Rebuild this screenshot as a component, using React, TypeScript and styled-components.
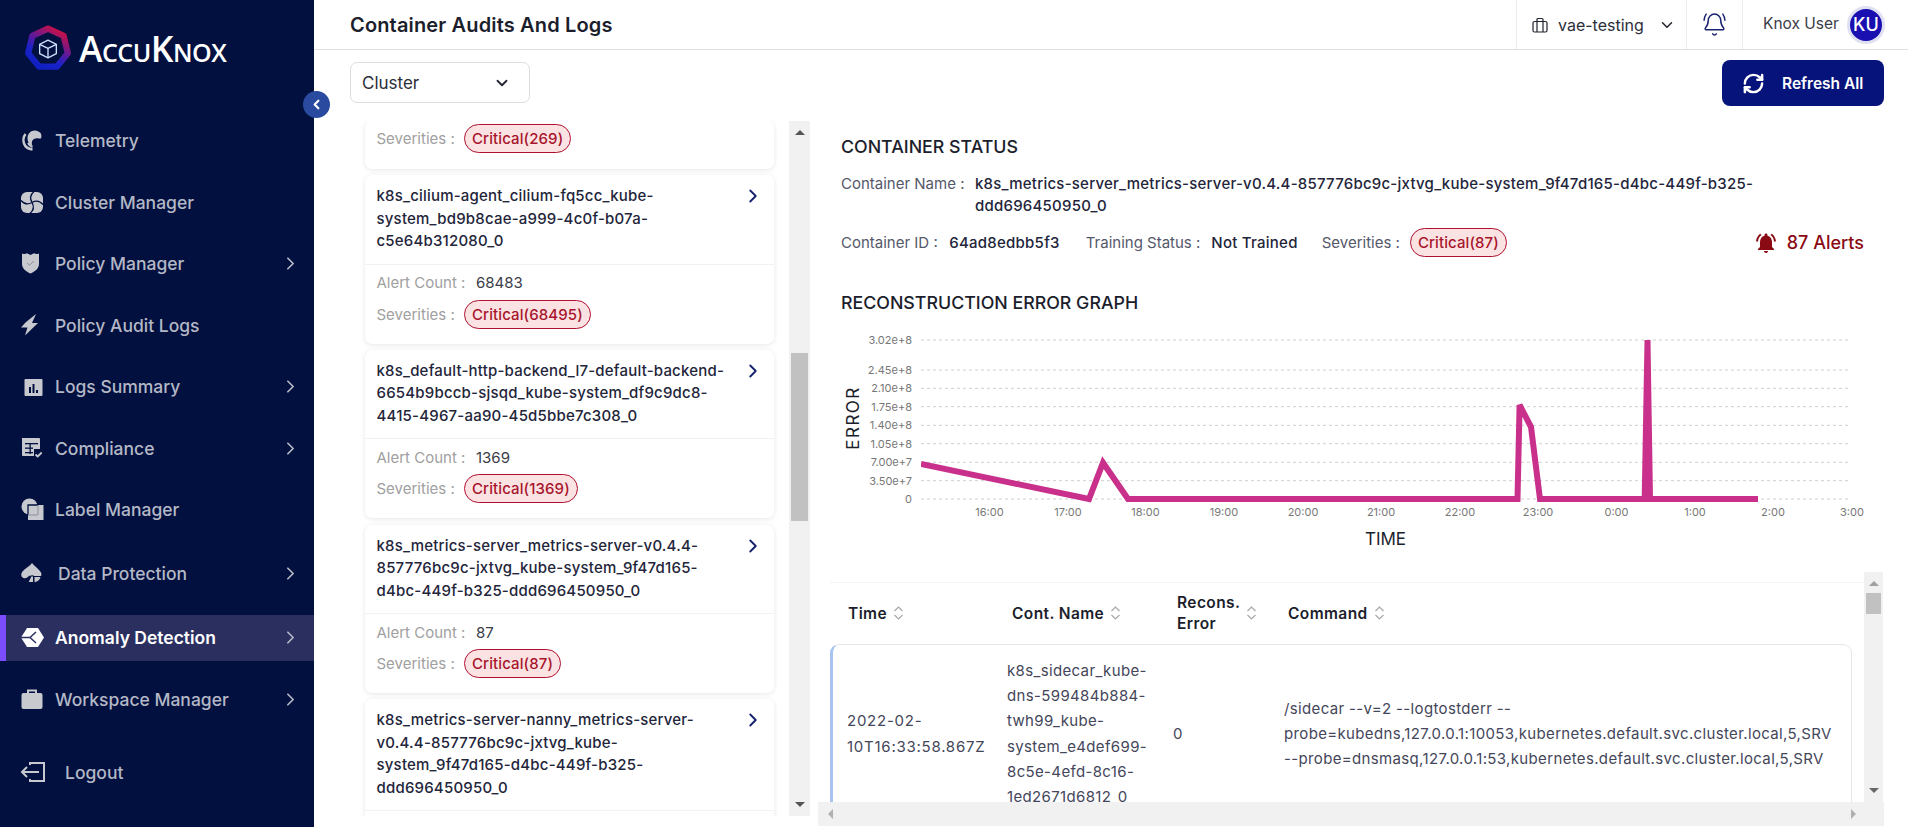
import { FunctionComponent, ReactNode } from 'react';
import styled, { createGlobalStyle } from 'styled-components';
import { BellRing, ChevronDown, ChevronLeft, ChevronRight, RefreshCw } from 'lucide-react';
import { MdNotificationsActive } from 'react-icons/md';

const GlobalStyle = createGlobalStyle`
  html, body {
    margin: 0;
    padding: 0;
    height: 100%;
    background: #fff;
    font-family: Inter, 'Liberation Sans', sans-serif;
    overflow: hidden;
  }
  * { box-sizing: border-box; }
`;

const Page = styled.div`
  display: flex;
  width: 1908px;
  height: 827px;
  position: relative;
  overflow: hidden;
`;

/* ---------- sidebar ---------- */

const Sidebar = styled.aside`
  width: 314px;
  flex: none;
  background: #01103f;
  display: flex;
  flex-direction: column;
`;

const LogoRow = styled.div`
  height: 117.5px;
  display: flex;
  align-items: flex-start;
  gap: 7px;
  padding: 25px 0 0 24px;
`;

const LogoText = styled.span`
  font-family: 'Open Sans', sans-serif;
  font-variant: small-caps;
  font-size: 35.5px;
  line-height: 46px;
  font-weight: 600;
  letter-spacing: -0.5px;
  color: #fff;
`;

const NavList = styled.nav`
  display: flex;
  flex-direction: column;
  gap: 15.5px;
`;

const NavItem = styled.div<{ $active?: boolean; $shift?: number; $textGap?: number }>`
  height: 46px;
  display: flex;
  align-items: center;
  margin-top: ${(p) => p.$shift ?? 0}px;
  padding-left: 20px;
  gap: ${(p) => p.$textGap ?? 10}px;
  font-size: 17.5px;
  font-weight: ${(p) => (p.$active ? 600 : 500)};
  color: ${(p) => (p.$active ? '#fff' : '#b4b8c6')};
  background: ${(p) => (p.$active ? '#2a2f5f' : 'transparent')};
  box-shadow: ${(p) => (p.$active ? 'inset 6px 0 0 #7c4dff' : 'none')};
`;

const NavIconBox = styled.span`
  width: 25px;
  height: 25px;
  flex: none;
  display: flex;
`;

const NavLabel = styled.span`
  flex: 1;
`;

const NavChevron = styled(ChevronRight)`
  width: 21px;
  height: 21px;
  margin-right: 13px;
  color: #b4b8c6;
  stroke-width: 2;
`;

const CollapseButton = styled.div`
  position: absolute;
  left: 303px;
  top: 91px;
  width: 27px;
  height: 27px;
  border-radius: 50%;
  background: #2a4aa0;
  color: #fff;
  display: flex;
  align-items: center;
  justify-content: center;
`;

const Logo = () => (
  <svg width="48" height="48" viewBox="0 0 46 46" style={{ flex: 'none' }}>
    <defs>
      <linearGradient id="logoRing" x1="0.8" y1="0" x2="0.2" y2="1">
        <stop offset="0" stopColor="#d3103f" />
        <stop offset="0.45" stopColor="#5a1a9e" />
        <stop offset="0.7" stopColor="#1a22c8" />
        <stop offset="1" stopColor="#0f1fc0" />
      </linearGradient>
    </defs>
    <polygon
      points="23,3.5 38,10.5 42,27 31.5,40 14.5,40 4,27 8,10.5"
      fill="none"
      stroke="url(#logoRing)"
      strokeWidth="6"
      strokeLinejoin="round"
    />
    <g fill="none" stroke="#cfe0ff" strokeWidth="1.3" strokeLinejoin="round">
      <polygon points="23,14.5 31,18.5 31,27.5 23,31.5 15,27.5 15,18.5" />
      <polyline points="15,18.5 23,22.5 31,18.5" />
      <line x1="23" y1="22.5" x2="23" y2="31.5" />
    </g>
  </svg>
);

const GLYPH = '#c8c9cf';
const NAVY = '#01103f';

const icons: Record<string, ReactNode> = {
  telemetry: (
    <>
      <path d="M20.500 5c-1.500-1.500-3.500-2.500-5.500-2.500-4.500 0-7.500 3.500-7.500 8 0 3.500 2 6.500 5 7.500-.8-1.500-1-3.500-.2-5.200 1-2 3.400-2.900 6.200-2.300 1.200.2 2 .2 2.500-.3.800-1.500.400-4-.5-5.200z" fill={GLYPH} />
      <path d="M5.500 6C3.300 9 3 12.500 4 15.500c1.200 3.400 4.500 5.500 8.500 6" fill="none" stroke={GLYPH} strokeWidth="2.400" />
      <path d="M8 15c1 2 2.500 3.300 4.500 4" fill="none" stroke={GLYPH} strokeWidth="2" />
    </>
  ),
  cluster: (
    <>
      <rect x="1" y="2" width="22" height="21" rx="6" fill={GLYPH} />
      <g fill="none" stroke={NAVY} strokeWidth="1.300">
        <path d="M12 12.500C10 9 10 5 14 1.500" />
        <path d="M12 12.500c3.500-2 7.500-2 11 2" />
        <path d="M12 12.500c2 3.500 2 7.500-2 11" />
        <path d="M12 12.500c-3.500 2-7.500 2-11-2" />
      </g>
    </>
  ),
  shield: (
    <>
      <path d="M2 2.500c2 .8 3.500.8 5-.2l3.500 1.700L14 2.300c1.500 1 3.500 1 5 .2v10.500c0 4.500-4 7.500-8.500 9.500C6 20.500 2 17.500 2 13z" fill={GLYPH} />
      <path d="M7 12l2.500 2.200L14 10" fill="none" stroke="#8a8d99" strokeWidth="1" />
    </>
  ),
  bolt: <path d="M16 1L5.500 9.500 1 14.500h6.500L5 22.500l13-12.500h-6z" fill={GLYPH} />,
  bars: (
    <>
      <rect x="4.500" y="5" width="18" height="17" rx="1" fill={GLYPH} />
      <g fill={NAVY}>
        <rect x="9" y="13" width="2" height="6" />
        <rect x="12.500" y="10" width="2" height="9" />
        <rect x="16" y="16" width="2" height="3" />
      </g>
    </>
  ),
  compliance: (
    <>
      <path d="M2 2h17a1 1 0 0 1 1 1v10h-6v7H3a1 1 0 0 1-1-1z" fill={GLYPH} />
      <g fill={NAVY}>
        <rect x="5" y="7" width="13" height="1.300" />
        <rect x="5" y="11.500" width="8" height="1.300" />
        <rect x="5" y="16" width="8" height="1.300" />
        <rect x="9.500" y="7" width="1.300" height="11" />
      </g>
      <path d="M15.500 18.500l2.200 2 4-4" fill="none" stroke={GLYPH} strokeWidth="1.800" />
    </>
  ),
  label: (
    <>
      <circle cx="9.500" cy="9.500" r="8" fill={GLYPH} />
      <rect x="8" y="8" width="15.500" height="15" fill={GLYPH} />
      <path d="M8 18V8h10" fill="none" stroke={NAVY} strokeWidth="1.300" />
      <path d="M18 8v9a1 1 0 0 1-1 1H8" fill="none" stroke="#8a8d99" strokeWidth="1" />
    </>
  ),
  spade: (
    <>
      <path d="M12 2c2 3 7 6 9 9.500 1.500 3-1 6-4.500 5.300-1-.2-2-.8-2.500-1.500v-.5h-5c-1.200 2-3.500 2.900-5.500 2.200C1 16 .5 13 2.500 10.500 5 7.500 10 5 12 2z" fill={GLYPH} />
      <path d="M13.500 15v6.500H8l3-6.500z" fill={GLYPH} stroke={NAVY} strokeWidth="1" />
      <path d="M14 15.500h7c-.5 3.500-3.500 6-7 6z" fill={GLYPH} stroke={NAVY} strokeWidth="1" />
    </>
  ),
  anomaly: (
    <>
      <polygon points="7,3 18,3 24,12.500 18,22 7,22 1,12.500" fill="#fff" />
      <path d="M1 12.500h9M10 12.500l6-5.500M10 12.500l6 5.500" fill="none" stroke="#2a2f5f" strokeWidth="1.500" />
    </>
  ),
  case: (
    <>
      <path d="M8 6V3.500h8V6" fill="none" stroke={GLYPH} strokeWidth="2" />
      <rect x="1.500" y="6" width="21" height="16" rx="2" fill={GLYPH} />
    </>
  ),
  logout: (
    <g fill="none" stroke={GLYPH} strokeWidth="2">
      <path d="M10 5V3h14v18H10v-2" />
      <path d="M19 12H2M7 7l-5 5 5 5" />
    </g>
  ),
};

const NavIcon: FunctionComponent<{ name: string }> = ({ name }) => (
  <NavIconBox>
    <svg width="25" height="25" viewBox="0 0 25 25">
      {icons[name]}
    </svg>
  </NavIconBox>
);

const navItems = [
  { label: 'Telemetry', icon: 'telemetry' },
  { label: 'Cluster Manager', icon: 'cluster' },
  { label: 'Policy Manager', icon: 'shield', arrow: true },
  { label: 'Policy Audit Logs', icon: 'bolt' },
  { label: 'Logs Summary', icon: 'bars', arrow: true },
  { label: 'Compliance', icon: 'compliance', arrow: true },
  { label: 'Label Manager', icon: 'label' },
  { label: 'Data Protection', icon: 'spade', arrow: true, shift: 2.5, textGap: 13 },
  { label: 'Anomaly Detection', icon: 'anomaly', arrow: true, active: true, shift: 2.5 },
  { label: 'Workspace Manager', icon: 'case', arrow: true },
  { label: 'Logout', icon: 'logout', shift: 11.5, textGap: 20 },
];

/* ---------- main column ---------- */

const Main = styled.main`
  flex: 1;
  min-width: 0;
  display: flex;
  flex-direction: column;
`;

const TopBar = styled.header`
  height: 50px;
  flex: none;
  display: flex;
  align-items: center;
  border-bottom: 1px solid #e0e0e0;
  padding-left: 36px;
`;

const PageTitle = styled.h1`
  flex: 1;
  margin: 0;
  font-size: 20px;
  font-weight: 600;
  letter-spacing: 0.15px;
  color: #1c1e2c;
`;

const TopSection = styled.div<{ $width: number; $center?: boolean; $inset?: number }>`
  width: ${(p) => p.$width}px;
  height: 100%;
  display: flex;
  align-items: center;
  justify-content: ${(p) => (p.$center ? 'center' : 'flex-start')};
  padding-left: ${(p) => p.$inset ?? 0}px;
  border-left: 1px solid #ececec;
`;

const WorkspaceName = styled.span`
  font-size: 16px;
  color: #2c2e3a;
  margin: 0 14px 0 10px;
`;

const UserName = styled.span`
  font-size: 15.5px;
  color: #3a3c48;
  margin: 0 8px 0 20px;
  position: relative;
  top: -1px;
`;

const Avatar = styled.div`
  width: 38px;
  height: 38px;
  border-radius: 50%;
  background: #1a0fb0;
  border: 3px solid #dfe0f2;
  color: #fff;
  font-size: 18px;
  font-weight: 500;
  display: flex;
  align-items: center;
  justify-content: center;
`;

const FilterRow = styled.div`
  height: 71px;
  flex: none;
  display: flex;
  justify-content: space-between;
  padding: 12px 24px 0 36px;
`;

const Select = styled.div`
  width: 180px;
  height: 41px;
  border: 1px solid #dcdcdc;
  border-radius: 7px;
  display: flex;
  align-items: center;
  justify-content: space-between;
  padding: 0 18px 0 11px;
  font-size: 17px;
  color: #2c2e3a;
`;

const RefreshButton = styled.div`
  width: 162px;
  height: 46px;
  margin-top: -2px;
  border-radius: 8px;
  background: #06137a;
  color: #fff;
  display: flex;
  align-items: center;
  gap: 17px;
  padding-left: 20px;
  font-size: 15.5px;
  font-weight: 600;
`;

const Content = styled.div`
  flex: 1;
  min-height: 0;
  display: flex;
`;

/* ---------- scrollbars ---------- */

const ScrollTrack = styled.div<{ $width: number }>`
  width: ${(p) => p.$width}px;
  flex: none;
  background: #f1f1f1;
  display: flex;
  flex-direction: column;
  align-items: center;
  position: relative;
`;

const ScrollThumb = styled.div<{ $top: number; $height: number }>`
  position: absolute;
  top: ${(p) => p.$top}px;
  left: 2px;
  right: 2px;
  height: ${(p) => p.$height}px;
  background: #c1c1c1;
`;

const Arrow = styled.span<{ $dir: 'up' | 'down' | 'left' | 'right'; $color?: string }>`
  width: 0;
  height: 0;
  border: 5px solid transparent;
  ${(p) => {
    const c = p.$color ?? '#555';
    if (p.$dir === 'up') return `border-bottom-color: ${c}; border-top-width: 0; margin-top: 9px;`;
    if (p.$dir === 'down') return `border-top-color: ${c}; border-bottom-width: 0; margin-top: auto; margin-bottom: 9px;`;
    if (p.$dir === 'left') return `border-right-color: ${c}; border-left-width: 0;`;
    return `border-left-color: ${c}; border-right-width: 0;`;
  }}
`;

/* ---------- container list ---------- */

const ListPane = styled.section`
  width: 496px;
  height: 695px;
  flex: none;
  display: flex;
  margin-right: 8px;
  padding-left: 37px;
`;

const ListViewport = styled.div`
  flex: 1;
  min-width: 0;
  display: flex;
  flex-direction: column;
  gap: 6.2px;
  overflow: hidden;
  padding: 0 15px 0 14px;
`;

// the last card runs on below the fold, so it keeps its height without its body
const Card = styled.article<{ $minHeight?: number }>`
  flex: none;
  min-height: ${(p) => p.$minHeight ?? 0}px;
  background: #fff;
  border-radius: 7px;
  box-shadow: 0 1px 5px rgba(0, 0, 0, 0.1);
`;

const CardHead = styled.div`
  display: flex;
  justify-content: space-between;
  padding: 10px 14px 11px 11.5px;
  border-bottom: 1px solid #f2f2f2;
`;

const CardTitle = styled.div`
  width: 352px;
  font-size: 15px;
  line-height: 22.5px;
  font-weight: 500;
  letter-spacing: 0.2px;
  color: #23253a;
`;

const CardChevron = styled(ChevronRight)`
  width: 22px;
  height: 22px;
  flex: none;
  color: #14206b;
  margin-right: -4px;
`;

const CardBody = styled.div`
  padding: 7px 11.5px 15px;
  display: flex;
  flex-direction: column;
  gap: 6px;
`;

const ClippedBody = styled(CardBody)`
  padding-top: 3px;
  padding-bottom: 16px;
`;

const Field = styled.div`
  display: flex;
  align-items: center;
  min-height: 22px;
  font-size: 15px;
`;

const FieldLabel = styled.span<{ $width?: number }>`
  color: #a0a0a0;
  width: ${(p) => (p.$width ? `${p.$width}px` : 'auto')};
`;

const FieldValue = styled.span`
  color: #3a3c48;
`;

const Pill = styled.span`
  height: 29px;
  display: inline-flex;
  align-items: center;
  padding: 0 7px;
  border: 1px solid #b01030;
  border-radius: 15px;
  background: #fbe3e3;
  color: #a8142c;
  font-size: 15px;
  font-weight: 500;
  letter-spacing: 0.1px;
`;

type ContainerCard = { title: string; count?: number; severity?: number };

const cards: ContainerCard[] = [
  { title: 'k8s_cilium-agent_cilium-fq5cc_kube-system_bd9b8cae-a999-4c0f-b07a-c5e64b312080_0', count: 68483, severity: 68495 },
  { title: 'k8s_default-http-backend_l7-default-backend-6654b9bccb-sjsqd_kube-system_df9c9dc8-4415-4967-aa90-45d5bbe7c308_0', count: 1369, severity: 1369 },
  { title: 'k8s_metrics-server_metrics-server-v0.4.4-857776bc9c-jxtvg_kube-system_9f47d165-d4bc-449f-b325-ddd696450950_0', count: 87, severity: 87 },
  { title: 'k8s_metrics-server-nanny_metrics-server-v0.4.4-857776bc9c-jxtvg_kube-system_9f47d165-d4bc-449f-b325-ddd696450950_0' },
];

/* ---------- detail panel ---------- */

const DetailPane = styled.section`
  flex: 1;
  min-width: 0;
  display: flex;
  flex-direction: column;
  padding-top: 14px;
`;

const DetailBlock = styled.div`
  padding: 0 44px 0 23px;
`;

const SectionTitle = styled.h2<{ $top?: number }>`
  margin: ${(p) => p.$top ?? 0}px 0 0;
  font-size: 17.8px;
  line-height: 24px;
  font-weight: 500;
  color: #1c1e2c;
`;

const NameRow = styled.div`
  display: flex;
  margin-top: 14px;
  font-size: 15px;
  line-height: 22px;
`;

const NameLabel = styled.span`
  width: 134px;
  flex: none;
  color: #55586a;
`;

const NameValue = styled.span`
  width: 800px;
  font-weight: 500;
  letter-spacing: 0.23px;
  color: #23253a;
`;

const StatusRow = styled.div`
  display: flex;
  align-items: center;
  margin-top: 11px;
  height: 29px;
  font-size: 15px;
`;

const StatusLabel = styled.span<{ $gap: number }>`
  color: #55586a;
  margin-right: ${(p) => p.$gap}px;
`;

const StatusValue = styled.span<{ $gap: number }>`
  color: #23253a;
  font-weight: 500;
  letter-spacing: 0.25px;
  margin-right: ${(p) => p.$gap}px;
`;

const AlertCount = styled.span`
  margin-left: auto;
  display: flex;
  align-items: center;
  gap: 9px;
  font-size: 18px;
  font-weight: 500;
  color: #8a0a14;
`;

const ChartSvg = styled.svg`
  display: block;
  margin-top: 5px;
  flex: none;
`;

/* ---------- table ---------- */

const TableFrame = styled.div`
  flex: none;
  margin-top: 12px;
  height: 230px;
  display: flex;
  padding-left: 12px;
`;

const TableViewport = styled.div`
  width: 1034px;
  flex: none;
  padding-top: 10px;
  overflow: hidden;
`;

const HeadRow = styled.div`
  display: grid;
  grid-template-columns: 164px 165px 111px 1fr;
  height: 61px;
  margin-bottom: 1px;
  align-items: center;
  border-top: 1px solid #f4f4f4;
`;

const HeadCell = styled.div`
  display: flex;
  align-items: center;
  gap: 6px;
  padding-left: 18px;
  font-size: 15.5px;
  line-height: 21px;
  font-weight: 600;
  letter-spacing: 0.4px;
  color: #1c1e2c;
`;

const BodyRow = styled.div`
  display: grid;
  grid-template-columns: 164px 165px 111px 1fr;
  align-items: center;
  margin-right: 12px;
  padding: 13px 0;
  border: 1px solid #e6e6e6;
  border-left: 3px solid #a9c4f0;
  border-radius: 9px;
`;

const BodyCell = styled.div<{ $pad: number; $spacing?: number }>`
  padding-left: ${(p) => p.$pad}px;
  font-size: 15px;
  line-height: 25.2px;
  letter-spacing: ${(p) => p.$spacing ?? 0.35}px;
  color: #44465a;
  overflow-wrap: anywhere;
`;

const HScrollbar = styled.div`
  height: 24px;
  flex: none;
  margin-right: 24px;
  background: #f1f1f1;
  display: flex;
  align-items: center;
  justify-content: space-between;
  padding: 0 28px 0 10px;
`;

const SortIcon = () => (
  <svg width="11" height="16" viewBox="0 0 11 16" fill="none" stroke="#a8a8a8" strokeWidth="1.200" style={{ flex: 'none' }}>
    <path d="M1.500 6l4-4 4 4M1.500 10l4 4 4-4" />
  </svg>
);

const CaseIcon = () => (
  <svg width="16" height="16" viewBox="0 0 16 16" fill="none" stroke="#22242f" strokeWidth="1.200" style={{ flex: 'none' }}>
    <rect x="1" y="4.500" width="14" height="10.500" rx="1.500" />
    <path d="M5 15V2.500a1 1 0 0 1 1-1h4a1 1 0 0 1 1 1V15" />
  </svg>
);

/* ---------- chart ---------- */

const yTicks: [string, number][] = [
  ['3.02e+8', 340],
  ['2.45e+8', 370],
  ['2.10e+8', 388.3],
  ['1.75e+8', 406.7],
  ['1.40e+8', 425.3],
  ['1.05e+8', 443.7],
  ['7.00e+7', 462.3],
  ['3.50e+7', 480.7],
  ['0', 499],
];

const xTicks: [string, number][] = [
  ['16:00', 989.5],
  ['17:00', 1068],
  ['18:00', 1145.5],
  ['19:00', 1224],
  ['20:00', 1303],
  ['21:00', 1381],
  ['22:00', 1460],
  ['23:00', 1538],
  ['0:00', 1616.5],
  ['1:00', 1695],
  ['2:00', 1773],
  ['3:00', 1852],
];

const series =
  '921,464 1089,499 1103,462.700 1128,499 1517.500,499 1519.600,405 1531,427 1540,499 1644.700,499 1647.500,340 1650,499 1758,499';

// viewBox keeps the page coordinates the ticks were measured in
const ErrorChart = () => (
  <ChartSvg width="1030" height="240" viewBox="841 320 1030 240">
    <defs>
      <clipPath id="plotArea">
        <rect x="921" y="338" width="930" height="165" />
      </clipPath>
    </defs>
    {yTicks.map(([label, y]) => (
      <g key={label}>
        <line x1="921" x2="1848" y1={y} y2={y} stroke="#cfcfcf" strokeDasharray="3 3" />
        <text x="912" y={y + 4} textAnchor="end" fontSize="11" fill="#777">
          {label}
        </text>
      </g>
    ))}
    {xTicks.map(([label, x]) => (
      <text key={label} x={x} y="516" textAnchor="middle" fontSize="11" fill="#777">
        {label}
      </text>
    ))}
    <polyline points={series} fill="none" stroke="#c9308c" strokeWidth="6" strokeLinejoin="miter" clipPath="url(#plotArea)" />
    <text x="1385.500" y="545" textAnchor="middle" fontSize="17" fill="#1c1e2c">
      TIME
    </text>
    <text transform="translate(859 418) rotate(-90)" textAnchor="middle" fontSize="17" letterSpacing="1.500" fill="#1c1e2c">
      ERROR
    </text>
  </ChartSvg>
);

const App = () => (
  <Page>
    <GlobalStyle />
    <Sidebar>
      <LogoRow>
        <Logo />
        <LogoText>AccuKnox</LogoText>
      </LogoRow>
      <NavList>
        {navItems.map((item) => (
          <NavItem key={item.label} $active={item.active} $shift={item.shift} $textGap={item.textGap}>
            <NavIcon name={item.icon} />
            <NavLabel>{item.label}</NavLabel>
            {item.arrow && <NavChevron />}
          </NavItem>
        ))}
      </NavList>
    </Sidebar>
    <CollapseButton>
      <ChevronLeft size={15} strokeWidth={3.5} />
    </CollapseButton>

    <Main>
      <TopBar>
        <PageTitle>Container Audits And Logs</PageTitle>
        <TopSection $width={170} $inset={15}>
          <CaseIcon />
          <WorkspaceName>vae-testing</WorkspaceName>
          <ChevronDown size={18} color="#22242f" />
        </TopSection>
        <TopSection $width={56} $center>
          <BellRing size={25} color="#1a2270" strokeWidth={1.4} />
        </TopSection>
        <TopSection $width={166}>
          <UserName>Knox User</UserName>
          <Avatar>KU</Avatar>
        </TopSection>
      </TopBar>

      <FilterRow>
        <Select>
          Cluster
          <ChevronDown size={18} strokeWidth={2.4} color="#22242f" />
        </Select>
        <RefreshButton>
          <RefreshCw size={23} strokeWidth={2.6} />
          Refresh All
        </RefreshButton>
      </FilterRow>

      <Content>
        <ListPane>
          <ListViewport>
            <Card>
              <ClippedBody>
                <Field>
                  <FieldLabel $width={87.5}>Severities :</FieldLabel>
                  <Pill>Critical(269)</Pill>
                </Field>
              </ClippedBody>
            </Card>
            {cards.map((card) => (
              <Card key={card.title} $minHeight={card.count === undefined ? 170 : 0}>
                <CardHead>
                  <CardTitle>{card.title}</CardTitle>
                  <CardChevron />
                </CardHead>
                {card.count !== undefined && (
                  <CardBody>
                    <Field>
                      <FieldLabel $width={99.5}>Alert Count :</FieldLabel>
                      <FieldValue>{card.count}</FieldValue>
                    </Field>
                    <Field>
                      <FieldLabel $width={87.5}>Severities :</FieldLabel>
                      <Pill>Critical({card.severity})</Pill>
                    </Field>
                  </CardBody>
                )}
              </Card>
            ))}
          </ListViewport>
          <ScrollTrack $width={21}>
            <ScrollThumb $top={232} $height={168} />
            <Arrow $dir="up" />
            <Arrow $dir="down" />
          </ScrollTrack>
        </ListPane>

        <DetailPane>
          <DetailBlock>
            <SectionTitle>CONTAINER STATUS</SectionTitle>
            <NameRow>
              <NameLabel>Container Name :</NameLabel>
              <NameValue>k8s_metrics-server_metrics-server-v0.4.4-857776bc9c-jxtvg_kube-system_9f47d165-d4bc-449f-b325-ddd696450950_0</NameValue>
            </NameRow>
            <StatusRow>
              <StatusLabel $gap={11.5}>Container ID :</StatusLabel>
              <StatusValue $gap={26}>64ad8edbb5f3</StatusValue>
              <StatusLabel $gap={11}>Training Status :</StatusLabel>
              <StatusValue $gap={24}>Not Trained</StatusValue>
              <StatusLabel $gap={10}>Severities :</StatusLabel>
              <Pill>Critical(87)</Pill>
              <AlertCount>
                <MdNotificationsActive size={24} />
                87 Alerts
              </AlertCount>
            </StatusRow>
            <SectionTitle $top={34}>RECONSTRUCTION ERROR GRAPH</SectionTitle>
            <ErrorChart />
          </DetailBlock>

          <TableFrame>
            <TableViewport>
              <HeadRow>
                <HeadCell>Time <SortIcon /></HeadCell>
                <HeadCell>Cont. Name <SortIcon /></HeadCell>
                <HeadCell>
                  <span>Recons.<br />Error</span> <SortIcon />
                </HeadCell>
                <HeadCell>Command <SortIcon /></HeadCell>
              </HeadRow>
              <BodyRow>
                <BodyCell $pad={14} $spacing={0.75}>2022-02-<br />10T16:33:58.867Z</BodyCell>
                <BodyCell $pad={10}>k8s_sidecar_kube-dns-599484b884-twh99_kube-system_e4def699-8c5e-4efd-8c16-1ed2671d6812_0</BodyCell>
                <BodyCell $pad={11}>0</BodyCell>
                <BodyCell $pad={11}>
                  /sidecar --v=2 --logtostderr --<br />
                  probe=kubedns,127.0.0.1:10053,kubernetes.default.svc.cluster.local,5,SRV<br />
                  --probe=dnsmasq,127.0.0.1:53,kubernetes.default.svc.cluster.local,5,SRV
                </BodyCell>
              </BodyRow>
            </TableViewport>
            <ScrollTrack $width={19}>
              <ScrollThumb $top={21} $height={21} />
              <Arrow $dir="up" $color="#a0a0a0" />
              <Arrow $dir="down" $color="#666" />
            </ScrollTrack>
          </TableFrame>
          <HScrollbar>
            <Arrow $dir="left" $color="#b0b0b0" />
            <Arrow $dir="right" $color="#b0b0b0" />
          </HScrollbar>
        </DetailPane>
      </Content>
    </Main>
  </Page>
);

export default App;
